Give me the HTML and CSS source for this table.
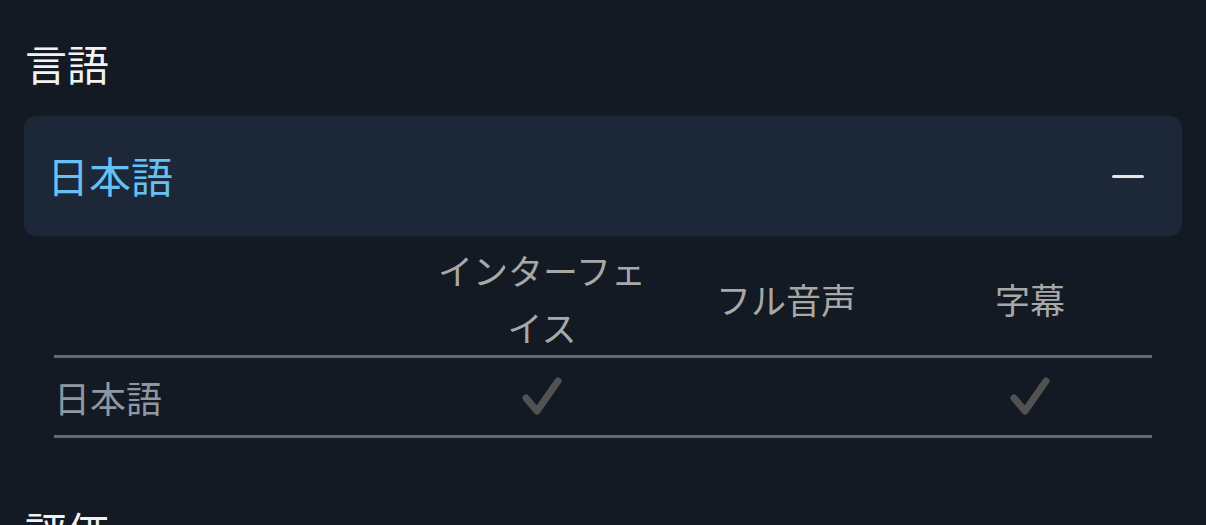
FILE: index.html
```html
<!DOCTYPE html>
<html lang="ja">
<head>
  <meta charset="UTF-8">
  <meta name="viewport" content="width=device-width, initial-scale=1.0">
  <title>言語</title>
  <link rel="stylesheet" href="styles.css">
</head>
<body>
  <div class="page">
    <section class="section">
      <h2 class="section-title">言語</h2>

      <div class="accordion">
        <div class="accordion-head">
          <span class="accordion-label">日本語</span>
          <span class="collapse-icon"></span>
        </div>
      </div>

      <table class="lang-table">
        <thead>
          <tr>
            <th class="col-name"></th>
            <th>インターフェイス</th>
            <th>フル音声</th>
            <th>字幕</th>
          </tr>
        </thead>
        <tbody>
          <tr>
            <td class="lang-name">日本語</td>
            <td>
              <svg class="check" viewBox="0 0 44 42" width="44" height="42">
                <path d="M6 22 L17 35 L38 5" />
              </svg>
            </td>
            <td></td>
            <td>
              <svg class="check" viewBox="0 0 44 42" width="44" height="42">
                <path d="M6 22 L17 35 L38 5" />
              </svg>
            </td>
          </tr>
        </tbody>
      </table>
    </section>

    <section class="section">
      <h2 class="section-title">評価</h2>
    </section>
  </div>
</body>
</html>
```

FILE: styles.css
```css
body {
  margin: 0;
  background-color: #131a23;
  font-family: "Noto Sans CJK JP", "Noto Sans", sans-serif;
  color: #ffffff;
}
.page {
  padding: 34px 24px 0;
}
.section-title {
  margin: 0 0 24px 1px;
  font-size: 42px;
  font-weight: 400;
  line-height: 58px;
  color: #f2f2f2;
}
.accordion {
  background-color: #1c2738;
  border-radius: 12px;
}
.accordion-head {
  height: 120px;
  display: flex;
  align-items: center;
  justify-content: space-between;
  padding: 0 38px 4px 23px;
  box-sizing: border-box;
}
.accordion-label {
  font-size: 42px;
  color: #66c0f4;
}
.collapse-icon {
  width: 32px;
  height: 3px;
  margin-top: 4px;
  background-color: #e6e6e6;
  border-radius: 2px;
}
.lang-table {
  width: calc(100% - 60px);
  margin: 5px 30px 63px;
  border-collapse: collapse;
  table-layout: fixed;
}
.lang-table th {
  font-size: 35px;
  font-weight: 400;
  line-height: 57px;
  color: #a8a8a8;
  padding: 0 12px;
  text-align: center;
  vertical-align: middle;
  border-bottom: 3px solid #686868;
}
.lang-table th.col-name {
  width: 33.33%;
  padding: 0;
}
.lang-table td {
  height: 77px;
  padding: 0;
  text-align: center;
  vertical-align: middle;
  border-bottom: 3px solid #686868;
}
.lang-table td.lang-name {
  text-align: left;
  font-size: 36px;
  color: #8f98a0;
}
.check {
  display: block;
  margin: 0 auto;
}
.check path {
  fill: none;
  stroke: #525252;
  stroke-width: 7;
  stroke-linecap: round;
  stroke-linejoin: round;
}
```
